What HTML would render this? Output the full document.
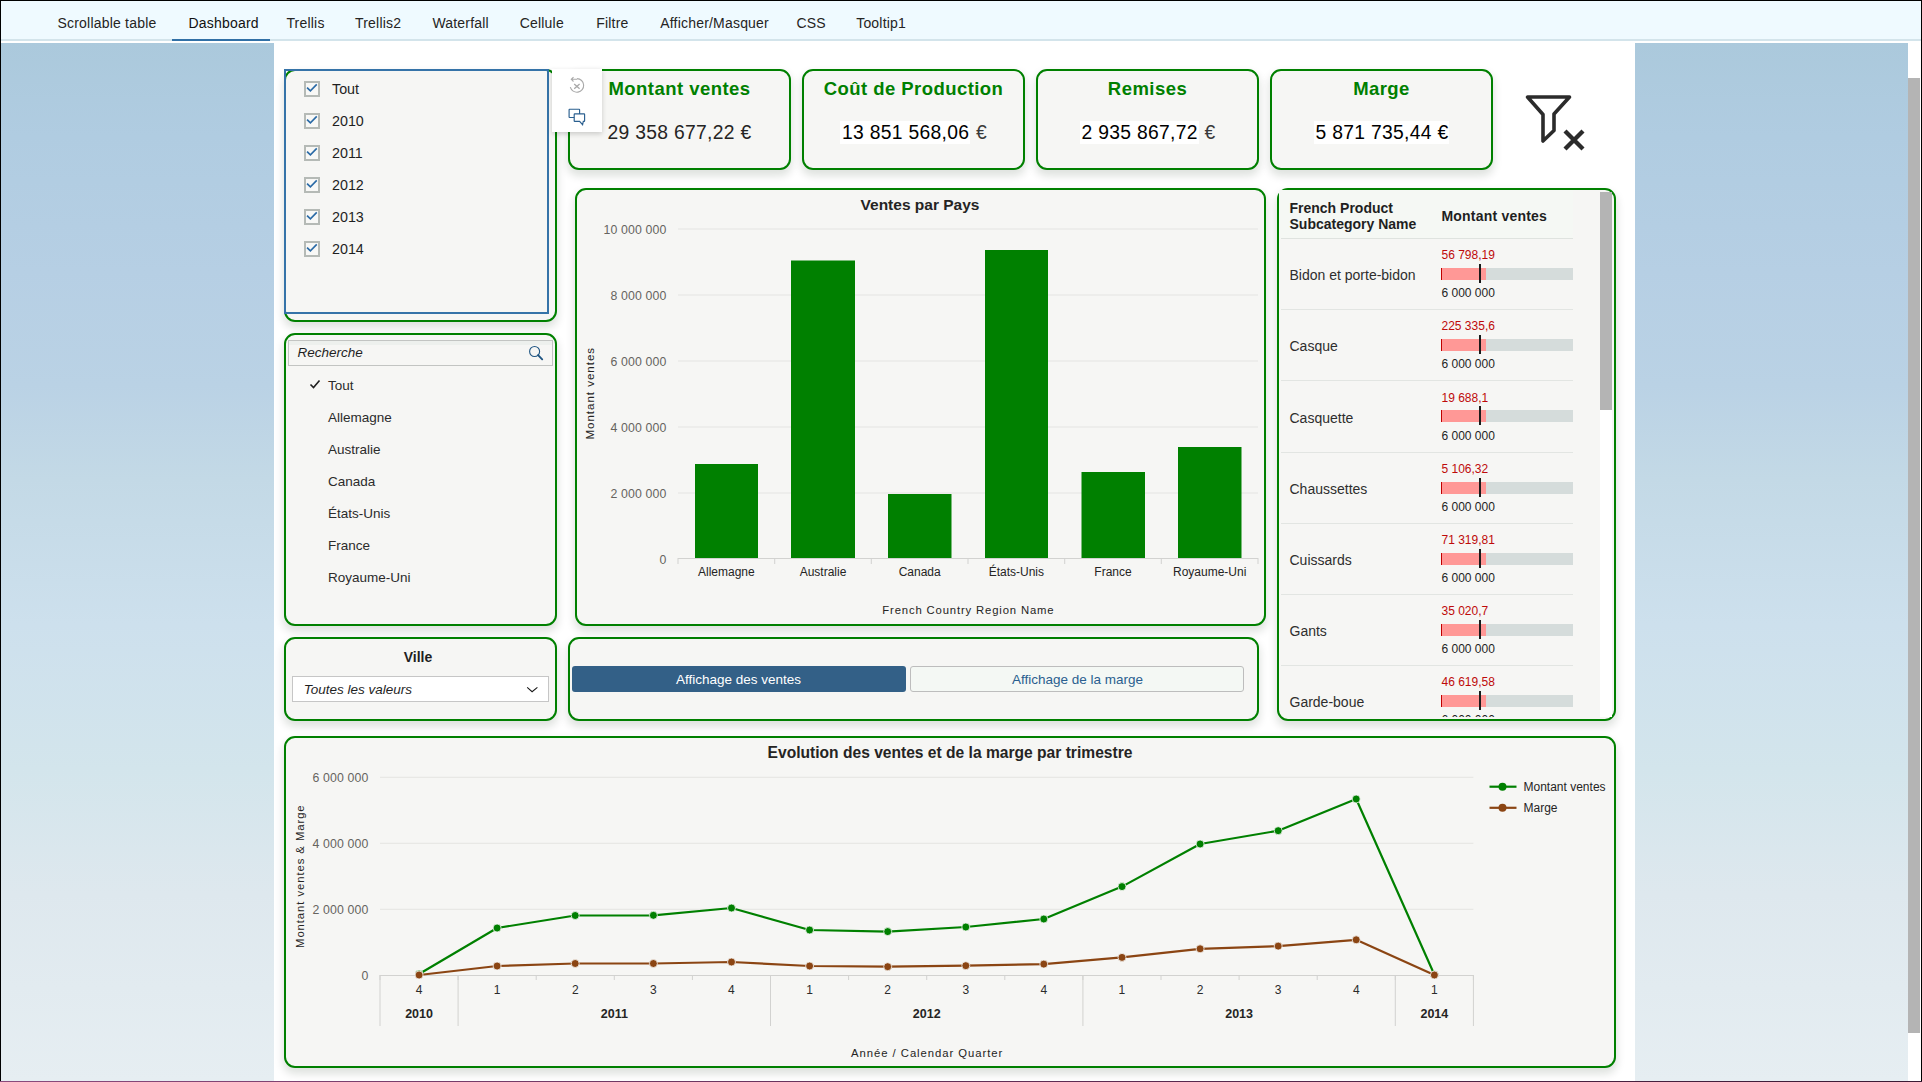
<!DOCTYPE html>
<html><head><meta charset="utf-8"><title>Dashboard</title>
<style>
html,body{margin:0;padding:0;}
body{width:1922px;height:1082px;overflow:hidden;position:relative;background:#fff;font-family:"Liberation Sans", sans-serif;}
.t{position:absolute;white-space:nowrap;font-family:"Liberation Sans", sans-serif;}
svg{position:absolute;overflow:visible;}
</style></head><body>

<div style="position:absolute;left:0px;top:0px;width:1922px;height:1082px;background:#ffffff;"></div>
<div style="position:absolute;left:1px;top:1px;width:1920px;height:38px;background:#effaff;"></div>
<div style="position:absolute;left:1px;top:39px;width:1920px;height:2px;background:#d3e4eb;"></div>
<div style="position:absolute;left:1px;top:43px;width:273px;height:1038px;background:linear-gradient(180deg,#abc9dc 0%,#b0cce1 9%,#b6cfe4 22%,#bad2e5 33%,#c3d9e6 42%,#cde0ed 56%,#d3e5ec 70%,#dee8ee 82%,#e6eef2 100%);"></div>
<div style="position:absolute;left:1635px;top:43px;width:273px;height:1038px;background:linear-gradient(180deg,#abc9dc 0%,#b0cce1 9%,#b6cfe4 22%,#bad2e5 33%,#c3d9e6 42%,#cde0ed 56%,#d3e5ec 70%,#dee8ee 82%,#e6eef2 100%);"></div>
<div style="position:absolute;left:1908px;top:41px;width:13px;height:1040px;background:#ffffff;"></div>
<div style="position:absolute;left:1908px;top:78px;width:12px;height:955px;background:#b4b4b4;"></div>
<div style="position:absolute;left:0px;top:0px;width:1922px;height:1px;background:#000;"></div>
<div style="position:absolute;left:0px;top:0px;width:1px;height:1082px;background:#000;"></div>
<div style="position:absolute;left:1921px;top:0px;width:1px;height:1082px;background:#000;"></div>
<div style="position:absolute;left:0px;top:1081px;width:1922px;height:1px;background:linear-gradient(90deg,#8a4a7c,#5a2a50 60%,#3a1a34);"></div>
<div class="t" style="top:15.65px;font-size:14px;line-height:14px;height:14px;color:#252423;letter-spacing:0.2px;left:57.50px;">Scrollable table</div>
<div class="t" style="top:15.65px;font-size:14px;line-height:14px;height:14px;color:#111111;letter-spacing:0.2px;left:188.50px;">Dashboard</div>
<div class="t" style="top:15.65px;font-size:14px;line-height:14px;height:14px;color:#252423;letter-spacing:0.2px;left:286.40px;">Trellis</div>
<div class="t" style="top:15.65px;font-size:14px;line-height:14px;height:14px;color:#252423;letter-spacing:0.2px;left:355.00px;">Trellis2</div>
<div class="t" style="top:15.65px;font-size:14px;line-height:14px;height:14px;color:#252423;letter-spacing:0.2px;left:432.40px;">Waterfall</div>
<div class="t" style="top:15.65px;font-size:14px;line-height:14px;height:14px;color:#252423;letter-spacing:0.2px;left:519.70px;">Cellule</div>
<div class="t" style="top:15.65px;font-size:14px;line-height:14px;height:14px;color:#252423;letter-spacing:0.2px;left:596.20px;">Filtre</div>
<div class="t" style="top:15.65px;font-size:14px;line-height:14px;height:14px;color:#252423;letter-spacing:0.2px;left:660.20px;">Afficher/Masquer</div>
<div class="t" style="top:15.65px;font-size:14px;line-height:14px;height:14px;color:#252423;letter-spacing:0.2px;left:796.50px;">CSS</div>
<div class="t" style="top:15.65px;font-size:14px;line-height:14px;height:14px;color:#252423;letter-spacing:0.2px;left:856.20px;">Tooltip1</div>
<div style="position:absolute;left:172px;top:39px;width:98px;height:2px;background:#3170a6;"></div>
<div style="position:absolute;left:284px;top:69px;width:273px;height:253px;box-sizing:border-box;border:2px solid #008000;border-radius:11px;background:#f6f6f4;box-shadow:0 5px 9px 1px rgba(10,30,10,0.13);"></div>
<div style="position:absolute;left:284px;top:69px;width:265px;height:245px;box-sizing:border-box;border:2px solid #3573a8;"></div>
<div style="position:absolute;left:304px;top:81px;width:16px;height:16px;box-sizing:border-box;border:2px solid #b5bab6;background:#f8f8f6;"></div>
<svg style="left:304px;top:81px" width="16" height="16" viewBox="0 0 16 16"><path d="M3.6 7.2 L6.4 9.9 L12.2 4.0" fill="none" stroke="#2a6aa6" stroke-width="1.6" stroke-linecap="square"/></svg>
<div class="t" style="top:82.41px;font-size:14.3px;line-height:14.3px;height:14.3px;color:#1f1f1f;left:332.00px;">Tout</div>
<div style="position:absolute;left:304px;top:113px;width:16px;height:16px;box-sizing:border-box;border:2px solid #b5bab6;background:#f8f8f6;"></div>
<svg style="left:304px;top:113px" width="16" height="16" viewBox="0 0 16 16"><path d="M3.6 7.2 L6.4 9.9 L12.2 4.0" fill="none" stroke="#2a6aa6" stroke-width="1.6" stroke-linecap="square"/></svg>
<div class="t" style="top:114.41px;font-size:14.3px;line-height:14.3px;height:14.3px;color:#1f1f1f;left:332.00px;">2010</div>
<div style="position:absolute;left:304px;top:145px;width:16px;height:16px;box-sizing:border-box;border:2px solid #b5bab6;background:#f8f8f6;"></div>
<svg style="left:304px;top:145px" width="16" height="16" viewBox="0 0 16 16"><path d="M3.6 7.2 L6.4 9.9 L12.2 4.0" fill="none" stroke="#2a6aa6" stroke-width="1.6" stroke-linecap="square"/></svg>
<div class="t" style="top:146.41px;font-size:14.3px;line-height:14.3px;height:14.3px;color:#1f1f1f;left:332.00px;">2011</div>
<div style="position:absolute;left:304px;top:177px;width:16px;height:16px;box-sizing:border-box;border:2px solid #b5bab6;background:#f8f8f6;"></div>
<svg style="left:304px;top:177px" width="16" height="16" viewBox="0 0 16 16"><path d="M3.6 7.2 L6.4 9.9 L12.2 4.0" fill="none" stroke="#2a6aa6" stroke-width="1.6" stroke-linecap="square"/></svg>
<div class="t" style="top:178.41px;font-size:14.3px;line-height:14.3px;height:14.3px;color:#1f1f1f;left:332.00px;">2012</div>
<div style="position:absolute;left:304px;top:209px;width:16px;height:16px;box-sizing:border-box;border:2px solid #b5bab6;background:#f8f8f6;"></div>
<svg style="left:304px;top:209px" width="16" height="16" viewBox="0 0 16 16"><path d="M3.6 7.2 L6.4 9.9 L12.2 4.0" fill="none" stroke="#2a6aa6" stroke-width="1.6" stroke-linecap="square"/></svg>
<div class="t" style="top:210.41px;font-size:14.3px;line-height:14.3px;height:14.3px;color:#1f1f1f;left:332.00px;">2013</div>
<div style="position:absolute;left:304px;top:241px;width:16px;height:16px;box-sizing:border-box;border:2px solid #b5bab6;background:#f8f8f6;"></div>
<svg style="left:304px;top:241px" width="16" height="16" viewBox="0 0 16 16"><path d="M3.6 7.2 L6.4 9.9 L12.2 4.0" fill="none" stroke="#2a6aa6" stroke-width="1.6" stroke-linecap="square"/></svg>
<div class="t" style="top:242.41px;font-size:14.3px;line-height:14.3px;height:14.3px;color:#1f1f1f;left:332.00px;">2014</div>
<div style="position:absolute;left:552px;top:69px;width:50px;height:63px;background:#ffffff;box-shadow:0 2px 5px rgba(0,0,0,0.18);z-index:5;"></div>
<svg style="left:566px;top:75px;z-index:6" width="20" height="20" viewBox="0 0 20 20">
<path d="M11.06 3.6 A6.8 6.8 0 1 1 4.3 12.2" fill="none" stroke="#a9a9a9" stroke-width="1.1"/>
<path d="M5.3 4.3 L11.2 4.3 M7.5 2.1 L5.3 4.3 L7.5 6.5" fill="none" stroke="#a9a9a9" stroke-width="1.1"/>
<path d="M8.2 9 L13.6 13.7 M13.6 9 L8.2 13.7" fill="none" stroke="#a9a9a9" stroke-width="1.3"/>
</svg>
<svg style="left:566px;top:106px;z-index:6" width="20" height="20" viewBox="0 0 20 20">
<path d="M8.2 11.5 L3.6 11.5 Q3.1 11.5 3.1 11 L3.1 3.7 Q3.1 3.2 3.6 3.2 L13.1 3.2 Q13.6 3.2 13.6 3.7 L13.6 7.9" fill="none" stroke="#2a5f8f" stroke-width="1.15"/>
<path d="M8.7 7.9 L18.1 7.9 Q18.6 7.9 18.6 8.4 L18.6 14.9 Q18.6 15.4 18.1 15.4 L17.3 15.4 L16.6 18.7 L13.6 15.4 L8.7 15.4 Q8.2 15.4 8.2 14.9 L8.2 8.4 Q8.2 7.9 8.7 7.9 Z" fill="none" stroke="#2a5f8f" stroke-width="1.15"/>
</svg>
<div style="position:absolute;left:284px;top:333px;width:273px;height:293px;box-sizing:border-box;border:2px solid #008000;border-radius:11px;background:#f6f6f4;box-shadow:0 5px 9px 1px rgba(10,30,10,0.13);"></div>
<div style="position:absolute;left:288px;top:340px;width:265px;height:26px;box-sizing:border-box;border:1px solid #c2c4c2;background:linear-gradient(180deg,#edf0ed 0px,#edf0ed 4px,#f6f6f4 4px);"></div>
<div class="t" style="top:346.49px;font-size:13.5px;line-height:13.5px;height:13.5px;color:#1f1f1f;font-style:italic;left:297.50px;">Recherche</div>
<svg style="left:528px;top:345px" width="16" height="16" viewBox="0 0 16 16">
<circle cx="6.6" cy="6.5" r="5" fill="none" stroke="#1f5582" stroke-width="1.1"/>
<path d="M10.1 10.1 L14.2 14.3" stroke="#1f5582" stroke-width="1.9" stroke-linecap="round"/></svg>
<svg style="left:309px;top:378px" width="12" height="12" viewBox="0 0 12 12">
<path d="M1.5 6.5 L4.5 9.5 L10.5 2.5" fill="none" stroke="#1f1f1f" stroke-width="1.6"/></svg>
<div class="t" style="top:379.29px;font-size:13.5px;line-height:13.5px;height:13.5px;color:#2b2b2b;left:328.00px;">Tout</div>
<div class="t" style="top:411.29px;font-size:13.5px;line-height:13.5px;height:13.5px;color:#2b2b2b;left:328.00px;">Allemagne</div>
<div class="t" style="top:443.29px;font-size:13.5px;line-height:13.5px;height:13.5px;color:#2b2b2b;left:328.00px;">Australie</div>
<div class="t" style="top:475.29px;font-size:13.5px;line-height:13.5px;height:13.5px;color:#2b2b2b;left:328.00px;">Canada</div>
<div class="t" style="top:507.29px;font-size:13.5px;line-height:13.5px;height:13.5px;color:#2b2b2b;left:328.00px;">États-Unis</div>
<div class="t" style="top:539.29px;font-size:13.5px;line-height:13.5px;height:13.5px;color:#2b2b2b;left:328.00px;">France</div>
<div class="t" style="top:571.29px;font-size:13.5px;line-height:13.5px;height:13.5px;color:#2b2b2b;left:328.00px;">Royaume-Uni</div>
<div style="position:absolute;left:284px;top:637px;width:273px;height:84px;box-sizing:border-box;border:2px solid #008000;border-radius:11px;background:#f6f6f4;box-shadow:0 5px 9px 1px rgba(10,30,10,0.13);"></div>
<div class="t" style="top:650.25px;font-size:14px;line-height:14px;height:14px;color:#1f1f1f;font-weight:bold;left:-182.00px;width:1200px;text-align:center;">Ville</div>
<div style="position:absolute;left:292px;top:676px;width:257px;height:26px;box-sizing:border-box;border:1px solid #c6c6c6;background:#ffffff;"></div>
<div class="t" style="top:682.99px;font-size:13.5px;line-height:13.5px;height:13.5px;color:#1f1f1f;font-style:italic;left:303.70px;">Toutes les valeurs</div>
<svg style="left:526px;top:684px" width="13" height="9" viewBox="0 0 13 9">
<path d="M1.2 3.4 L6.1 7.7 L11.4 3.4" fill="none" stroke="#151515" stroke-width="1.05"/></svg>
<div style="position:absolute;left:568px;top:637px;width:691px;height:84px;box-sizing:border-box;border:2px solid #008000;border-radius:11px;background:#f6f6f4;box-shadow:0 5px 9px 1px rgba(10,30,10,0.13);"></div>
<div style="position:absolute;left:572px;top:666px;width:334px;height:26px;background:#336087;border-radius:3px;"></div>
<div class="t" style="top:673.09px;font-size:13.5px;line-height:13.5px;height:13.5px;color:#ffffff;left:138.50px;width:1200px;text-align:center;">Affichage des ventes</div>
<div style="position:absolute;left:910px;top:666px;width:334px;height:26px;box-sizing:border-box;border:1px solid #bdbdbd;border-radius:3px;background:#f4f8f4;"></div>
<div class="t" style="top:673.09px;font-size:13.5px;line-height:13.5px;height:13.5px;color:#2a5f8f;left:477.50px;width:1200px;text-align:center;">Affichage de la marge</div>
<div style="position:absolute;left:568px;top:69px;width:223px;height:101px;box-sizing:border-box;border:2px solid #008000;border-radius:11px;background:#f6f6f4;box-shadow:0 5px 9px 1px rgba(10,30,10,0.13);"></div>
<div class="t" style="top:79.58px;font-size:18.5px;line-height:18.5px;height:18.5px;color:#008000;font-weight:bold;letter-spacing:0.45px;left:79.50px;width:1200px;text-align:center;">Montant ventes</div>
<div class="t" style="top:122.70px;font-size:19.3px;line-height:19.3px;height:19.3px;color:#252423;letter-spacing:0.3px;left:79.50px;width:1200px;text-align:center;">29 358 677,22 €</div>
<div style="position:absolute;left:802px;top:69px;width:223px;height:101px;box-sizing:border-box;border:2px solid #008000;border-radius:11px;background:#f6f6f4;box-shadow:0 5px 9px 1px rgba(10,30,10,0.13);"></div>
<div class="t" style="top:79.58px;font-size:18.5px;line-height:18.5px;height:18.5px;color:#008000;font-weight:bold;letter-spacing:0.45px;left:313.50px;width:1200px;text-align:center;">Coût de Production</div>
<div class="t" style="top:122.70px;font-size:19.3px;line-height:19.3px;height:19.3px;color:#000;letter-spacing:0.3px;left:313.50px;width:1200px;text-align:center;"><span style="background:#ffffff;color:#000;padding:1px 1px 1px 2px;">13 851 568,06</span> <span style="color:#3a3a3a">€</span></div>
<div style="position:absolute;left:1036px;top:69px;width:223px;height:101px;box-sizing:border-box;border:2px solid #008000;border-radius:11px;background:#f6f6f4;box-shadow:0 5px 9px 1px rgba(10,30,10,0.13);"></div>
<div class="t" style="top:79.58px;font-size:18.5px;line-height:18.5px;height:18.5px;color:#008000;font-weight:bold;letter-spacing:0.45px;left:547.50px;width:1200px;text-align:center;">Remises</div>
<div class="t" style="top:122.70px;font-size:19.3px;line-height:19.3px;height:19.3px;color:#000;letter-spacing:0.3px;left:547.50px;width:1200px;text-align:center;"><span style="background:#ffffff;color:#000;padding:1px 1px 1px 2px;">2 935 867,72</span> <span style="color:#3a3a3a">€</span></div>
<div style="position:absolute;left:1270px;top:69px;width:223px;height:101px;box-sizing:border-box;border:2px solid #008000;border-radius:11px;background:#f6f6f4;box-shadow:0 5px 9px 1px rgba(10,30,10,0.13);"></div>
<div class="t" style="top:79.58px;font-size:18.5px;line-height:18.5px;height:18.5px;color:#008000;font-weight:bold;letter-spacing:0.45px;left:781.50px;width:1200px;text-align:center;">Marge</div>
<div class="t" style="top:122.70px;font-size:19.3px;line-height:19.3px;height:19.3px;color:#000;letter-spacing:0.3px;left:781.50px;width:1200px;text-align:center;"><span style="background:#ffffff;color:#000;padding:1px 1px 1px 2px;">5 871 735,44 €</span></div>
<svg style="left:1520px;top:90px" width="72" height="66" viewBox="0 0 72 66">
<path d="M7.5 7 L49.5 7 L34 24 L34 40.5 L23 51 L23 24.5 Z" fill="none" stroke="#2b2b2b" stroke-width="3.6" stroke-linejoin="round"/>
<path d="M45 41 L63 59 M63 41 L45 59" stroke="#2b2b2b" stroke-width="4.3"/>
</svg>
<div style="position:absolute;left:575px;top:188px;width:691px;height:438px;box-sizing:border-box;border:2px solid #008000;border-radius:11px;background:#f6f6f4;box-shadow:0 5px 9px 1px rgba(10,30,10,0.13);"></div>
<div class="t" style="top:197.03px;font-size:15.5px;line-height:15.5px;height:15.5px;color:#252423;font-weight:bold;left:320.00px;width:1200px;text-align:center;">Ventes par Pays</div>
<svg style="left:0px;top:0px" width="1922" height="1082"><rect x="678" y="492.5" width="580" height="1" fill="#e4e4e2"/><rect x="678" y="426.5" width="580" height="1" fill="#e4e4e2"/><rect x="678" y="360.5" width="580" height="1" fill="#e4e4e2"/><rect x="678" y="294.5" width="580" height="1" fill="#e4e4e2"/><rect x="678" y="228.5" width="580" height="1" fill="#e4e4e2"/><rect x="678" y="558" width="580" height="1" fill="#d2d2d0"/><rect x="677.5" y="558" width="1" height="6" fill="#d2d2d0"/><rect x="774.2" y="558" width="1" height="6" fill="#d2d2d0"/><rect x="870.8" y="558" width="1" height="6" fill="#d2d2d0"/><rect x="967.5" y="558" width="1" height="6" fill="#d2d2d0"/><rect x="1064.2" y="558" width="1" height="6" fill="#d2d2d0"/><rect x="1160.8" y="558" width="1" height="6" fill="#d2d2d0"/><rect x="1257.5" y="558" width="1" height="6" fill="#d2d2d0"/><rect x="695" y="464" width="63" height="94" fill="#008000"/><rect x="791" y="260.5" width="64" height="297.5" fill="#008000"/><rect x="888" y="494" width="63.5" height="64" fill="#008000"/><rect x="985" y="250" width="63" height="308" fill="#008000"/><rect x="1081.5" y="472" width="63.5" height="86" fill="#008000"/><rect x="1178" y="447" width="63.5" height="111" fill="#008000"/></svg>
<div class="t" style="top:553.87px;font-size:12.3px;line-height:12.3px;height:12.3px;color:#66645f;letter-spacing:0.15px;left:-533.50px;width:1200px;text-align:right;">0</div>
<div class="t" style="top:487.87px;font-size:12.3px;line-height:12.3px;height:12.3px;color:#66645f;letter-spacing:0.15px;left:-533.50px;width:1200px;text-align:right;">2 000 000</div>
<div class="t" style="top:421.87px;font-size:12.3px;line-height:12.3px;height:12.3px;color:#66645f;letter-spacing:0.15px;left:-533.50px;width:1200px;text-align:right;">4 000 000</div>
<div class="t" style="top:355.87px;font-size:12.3px;line-height:12.3px;height:12.3px;color:#66645f;letter-spacing:0.15px;left:-533.50px;width:1200px;text-align:right;">6 000 000</div>
<div class="t" style="top:289.87px;font-size:12.3px;line-height:12.3px;height:12.3px;color:#66645f;letter-spacing:0.15px;left:-533.50px;width:1200px;text-align:right;">8 000 000</div>
<div class="t" style="top:223.87px;font-size:12.3px;line-height:12.3px;height:12.3px;color:#66645f;letter-spacing:0.15px;left:-533.50px;width:1200px;text-align:right;">10 000 000</div>
<div class="t" style="top:566.22px;font-size:12px;line-height:12px;height:12px;color:#252423;left:126.34px;width:1200px;text-align:center;">Allemagne</div>
<div class="t" style="top:566.22px;font-size:12px;line-height:12px;height:12px;color:#252423;left:223.00px;width:1200px;text-align:center;">Australie</div>
<div class="t" style="top:566.22px;font-size:12px;line-height:12px;height:12px;color:#252423;left:319.67px;width:1200px;text-align:center;">Canada</div>
<div class="t" style="top:566.22px;font-size:12px;line-height:12px;height:12px;color:#252423;left:416.35px;width:1200px;text-align:center;">États-Unis</div>
<div class="t" style="top:566.22px;font-size:12px;line-height:12px;height:12px;color:#252423;left:513.01px;width:1200px;text-align:center;">France</div>
<div class="t" style="top:566.22px;font-size:12px;line-height:12px;height:12px;color:#252423;left:609.68px;width:1200px;text-align:center;">Royaume-Uni</div>
<div class="t" style="top:605.35px;font-size:11.3px;line-height:11.3px;height:11.3px;color:#252423;letter-spacing:0.85px;left:368.40px;width:1200px;text-align:center;">French Country Region Name</div>
<div class="t" style="left:540.5px;top:388px;width:100px;height:11.5px;font-size:11.5px;line-height:11.5px;text-align:center;color:#252423;transform:rotate(-90deg);transform-origin:50% 50%;letter-spacing:1px;text-indent:1px;">Montant ventes</div>
<div style="position:absolute;left:1277px;top:188px;width:339px;height:533px;box-sizing:border-box;border:2px solid #008000;border-radius:11px;background:#f6f6f4;box-shadow:0 5px 9px 1px rgba(10,30,10,0.13);overflow:hidden;"></div>
<div style="position:absolute;left:1279px;top:190px;width:294px;height:48px;background:#f5f8f4;"></div>
<div class="t" style="top:201.05px;font-size:14px;line-height:14px;height:14px;color:#1f1f1f;font-weight:bold;left:1289.50px;">French Product</div>
<div class="t" style="top:217.05px;font-size:14px;line-height:14px;height:14px;color:#1f1f1f;font-weight:bold;left:1289.50px;">Subcategory Name</div>
<div class="t" style="top:208.75px;font-size:14px;line-height:14px;height:14px;color:#1f1f1f;font-weight:bold;letter-spacing:0.2px;left:1441.50px;">Montant ventes</div>
<div style="position:absolute;left:1281px;top:238px;width:292px;height:1px;background:#dfe3df;"></div>
<div style="position:absolute;left:1600px;top:192px;width:12px;height:218px;background:#b4b4b4;"></div>
<div style="position:absolute;left:1600px;top:410px;width:12px;height:307px;background:#ffffff;"></div>
<div style="position:absolute;left:1279px;top:239px;width:321px;height:478px;overflow:hidden;">
<div class="t" style="left:10.5px;top:29.25px;font-size:14px;line-height:14px;color:#2e2e2e;">Bidon et porte-bidon</div>
<div class="t" style="left:162.5px;top:10.22px;font-size:12px;line-height:12px;color:#be0a0a;">56 798,19</div>
<div style="position:absolute;left:162px;top:29.0px;width:132px;height:12px;background:#d5dcdb;"></div>
<div style="position:absolute;left:162px;top:29.0px;width:45px;height:12px;background:#ff9896;"></div>
<div style="position:absolute;left:162px;top:29.0px;width:1px;height:12px;background:#c00000;"></div>
<div style="position:absolute;left:200px;top:25.0px;width:2px;height:19px;background:#1a1a1a;"></div>
<div class="t" style="left:162.5px;top:48.22px;font-size:12px;line-height:12px;color:#1f1f1f;">6 000 000</div>
<div style="position:absolute;left:2px;top:70.2px;width:292px;height:1px;background:#e2e5e2;"></div>
<div class="t" style="left:10.5px;top:100.42px;font-size:14px;line-height:14px;color:#2e2e2e;">Casque</div>
<div class="t" style="left:162.5px;top:81.39px;font-size:12px;line-height:12px;color:#be0a0a;">225 335,6</div>
<div style="position:absolute;left:162px;top:100.2px;width:132px;height:12px;background:#d5dcdb;"></div>
<div style="position:absolute;left:162px;top:100.2px;width:45px;height:12px;background:#ff9896;"></div>
<div style="position:absolute;left:162px;top:100.2px;width:1px;height:12px;background:#c00000;"></div>
<div style="position:absolute;left:200px;top:96.2px;width:2px;height:19px;background:#1a1a1a;"></div>
<div class="t" style="left:162.5px;top:119.39px;font-size:12px;line-height:12px;color:#1f1f1f;">6 000 000</div>
<div style="position:absolute;left:2px;top:141.3px;width:292px;height:1px;background:#e2e5e2;"></div>
<div class="t" style="left:10.5px;top:171.59px;font-size:14px;line-height:14px;color:#2e2e2e;">Casquette</div>
<div class="t" style="left:162.5px;top:152.56px;font-size:12px;line-height:12px;color:#be0a0a;">19 688,1</div>
<div style="position:absolute;left:162px;top:171.3px;width:132px;height:12px;background:#d5dcdb;"></div>
<div style="position:absolute;left:162px;top:171.3px;width:45px;height:12px;background:#ff9896;"></div>
<div style="position:absolute;left:162px;top:171.3px;width:1px;height:12px;background:#c00000;"></div>
<div style="position:absolute;left:200px;top:167.3px;width:2px;height:19px;background:#1a1a1a;"></div>
<div class="t" style="left:162.5px;top:190.56px;font-size:12px;line-height:12px;color:#1f1f1f;">6 000 000</div>
<div style="position:absolute;left:2px;top:212.5px;width:292px;height:1px;background:#e2e5e2;"></div>
<div class="t" style="left:10.5px;top:242.76px;font-size:14px;line-height:14px;color:#2e2e2e;">Chaussettes</div>
<div class="t" style="left:162.5px;top:223.73px;font-size:12px;line-height:12px;color:#be0a0a;">5 106,32</div>
<div style="position:absolute;left:162px;top:242.5px;width:132px;height:12px;background:#d5dcdb;"></div>
<div style="position:absolute;left:162px;top:242.5px;width:45px;height:12px;background:#ff9896;"></div>
<div style="position:absolute;left:162px;top:242.5px;width:1px;height:12px;background:#c00000;"></div>
<div style="position:absolute;left:200px;top:238.5px;width:2px;height:19px;background:#1a1a1a;"></div>
<div class="t" style="left:162.5px;top:261.73px;font-size:12px;line-height:12px;color:#1f1f1f;">6 000 000</div>
<div style="position:absolute;left:2px;top:283.7px;width:292px;height:1px;background:#e2e5e2;"></div>
<div class="t" style="left:10.5px;top:313.93px;font-size:14px;line-height:14px;color:#2e2e2e;">Cuissards</div>
<div class="t" style="left:162.5px;top:294.90px;font-size:12px;line-height:12px;color:#be0a0a;">71 319,81</div>
<div style="position:absolute;left:162px;top:313.7px;width:132px;height:12px;background:#d5dcdb;"></div>
<div style="position:absolute;left:162px;top:313.7px;width:45px;height:12px;background:#ff9896;"></div>
<div style="position:absolute;left:162px;top:313.7px;width:1px;height:12px;background:#c00000;"></div>
<div style="position:absolute;left:200px;top:309.7px;width:2px;height:19px;background:#1a1a1a;"></div>
<div class="t" style="left:162.5px;top:332.90px;font-size:12px;line-height:12px;color:#1f1f1f;">6 000 000</div>
<div style="position:absolute;left:2px;top:354.9px;width:292px;height:1px;background:#e2e5e2;"></div>
<div class="t" style="left:10.5px;top:385.10px;font-size:14px;line-height:14px;color:#2e2e2e;">Gants</div>
<div class="t" style="left:162.5px;top:366.07px;font-size:12px;line-height:12px;color:#be0a0a;">35 020,7</div>
<div style="position:absolute;left:162px;top:384.9px;width:132px;height:12px;background:#d5dcdb;"></div>
<div style="position:absolute;left:162px;top:384.9px;width:45px;height:12px;background:#ff9896;"></div>
<div style="position:absolute;left:162px;top:384.9px;width:1px;height:12px;background:#c00000;"></div>
<div style="position:absolute;left:200px;top:380.9px;width:2px;height:19px;background:#1a1a1a;"></div>
<div class="t" style="left:162.5px;top:404.07px;font-size:12px;line-height:12px;color:#1f1f1f;">6 000 000</div>
<div style="position:absolute;left:2px;top:426.0px;width:292px;height:1px;background:#e2e5e2;"></div>
<div class="t" style="left:10.5px;top:456.27px;font-size:14px;line-height:14px;color:#2e2e2e;">Garde-boue</div>
<div class="t" style="left:162.5px;top:437.24px;font-size:12px;line-height:12px;color:#be0a0a;">46 619,58</div>
<div style="position:absolute;left:162px;top:456.0px;width:132px;height:12px;background:#d5dcdb;"></div>
<div style="position:absolute;left:162px;top:456.0px;width:45px;height:12px;background:#ff9896;"></div>
<div style="position:absolute;left:162px;top:456.0px;width:1px;height:12px;background:#c00000;"></div>
<div style="position:absolute;left:200px;top:452.0px;width:2px;height:19px;background:#1a1a1a;"></div>
<div class="t" style="left:162.5px;top:475.24px;font-size:12px;line-height:12px;color:#1f1f1f;">6 000 000</div>
</div>
<div style="position:absolute;left:284px;top:736px;width:1332px;height:332px;box-sizing:border-box;border:2px solid #008000;border-radius:11px;background:#f6f6f4;box-shadow:0 5px 9px 1px rgba(10,30,10,0.13);"></div>
<div class="t" style="top:744.98px;font-size:15.6px;line-height:15.6px;height:15.6px;color:#252423;font-weight:bold;left:350.00px;width:1200px;text-align:center;">Evolution des ventes et de la marge par trimestre</div>
<svg style="left:0px;top:0px" width="1922" height="1082"><rect x="380" y="908.8" width="1093.4" height="1" fill="#e4e4e2"/><rect x="380" y="842.8" width="1093.4" height="1" fill="#e4e4e2"/><rect x="380" y="776.8" width="1093.4" height="1" fill="#e4e4e2"/><rect x="380" y="975" width="1093.4" height="1" fill="#d2d2d0"/><rect x="379.5" y="975" width="1" height="5" fill="#d2d2d0"/><rect x="457.6" y="975" width="1" height="5" fill="#d2d2d0"/><rect x="535.7" y="975" width="1" height="5" fill="#d2d2d0"/><rect x="613.8" y="975" width="1" height="5" fill="#d2d2d0"/><rect x="691.9" y="975" width="1" height="5" fill="#d2d2d0"/><rect x="770.0" y="975" width="1" height="5" fill="#d2d2d0"/><rect x="848.1" y="975" width="1" height="5" fill="#d2d2d0"/><rect x="926.2" y="975" width="1" height="5" fill="#d2d2d0"/><rect x="1004.3" y="975" width="1" height="5" fill="#d2d2d0"/><rect x="1082.4" y="975" width="1" height="5" fill="#d2d2d0"/><rect x="1160.5" y="975" width="1" height="5" fill="#d2d2d0"/><rect x="1238.6" y="975" width="1" height="5" fill="#d2d2d0"/><rect x="1316.7" y="975" width="1" height="5" fill="#d2d2d0"/><rect x="1394.8" y="975" width="1" height="5" fill="#d2d2d0"/><rect x="1472.9" y="975" width="1" height="5" fill="#d2d2d0"/><rect x="379.5" y="975" width="1" height="51" fill="#d2d2d0"/><rect x="457.6" y="975" width="1" height="51" fill="#d2d2d0"/><rect x="770.0" y="975" width="1" height="51" fill="#d2d2d0"/><rect x="1082.4" y="975" width="1" height="51" fill="#d2d2d0"/><rect x="1394.8" y="975" width="1" height="51" fill="#d2d2d0"/><rect x="1472.9" y="975" width="1" height="51" fill="#d2d2d0"/><polyline points="419.1,974.0 497.1,928.0 575.2,915.5 653.4,915.3 731.5,908.0 809.6,930.0 887.7,931.6 965.8,927.0 1043.8,919.0 1122.0,886.6 1200.1,844.0 1278.2,830.7 1356.2,799.0 1434.4,974.8" fill="none" stroke="#008000" stroke-width="2.2" stroke-linejoin="round"/><circle cx="419.1" cy="974.0" r="4" fill="#008000" stroke="#f6f6f4" stroke-width="0.8"/><circle cx="497.1" cy="928.0" r="4" fill="#008000" stroke="#f6f6f4" stroke-width="0.8"/><circle cx="575.2" cy="915.5" r="4" fill="#008000" stroke="#f6f6f4" stroke-width="0.8"/><circle cx="653.4" cy="915.3" r="4" fill="#008000" stroke="#f6f6f4" stroke-width="0.8"/><circle cx="731.5" cy="908.0" r="4" fill="#008000" stroke="#f6f6f4" stroke-width="0.8"/><circle cx="809.6" cy="930.0" r="4" fill="#008000" stroke="#f6f6f4" stroke-width="0.8"/><circle cx="887.7" cy="931.6" r="4" fill="#008000" stroke="#f6f6f4" stroke-width="0.8"/><circle cx="965.8" cy="927.0" r="4" fill="#008000" stroke="#f6f6f4" stroke-width="0.8"/><circle cx="1043.8" cy="919.0" r="4" fill="#008000" stroke="#f6f6f4" stroke-width="0.8"/><circle cx="1122.0" cy="886.6" r="4" fill="#008000" stroke="#f6f6f4" stroke-width="0.8"/><circle cx="1200.1" cy="844.0" r="4" fill="#008000" stroke="#f6f6f4" stroke-width="0.8"/><circle cx="1278.2" cy="830.7" r="4" fill="#008000" stroke="#f6f6f4" stroke-width="0.8"/><circle cx="1356.2" cy="799.0" r="4" fill="#008000" stroke="#f6f6f4" stroke-width="0.8"/><circle cx="1434.4" cy="974.8" r="4" fill="#008000" stroke="#f6f6f4" stroke-width="0.8"/><polyline points="419.1,975.0 497.1,966.0 575.2,963.5 653.4,963.5 731.5,962.0 809.6,966.0 887.7,966.7 965.8,965.7 1043.8,964.1 1122.0,957.4 1200.1,948.8 1278.2,946.1 1356.2,939.8 1434.4,975.0" fill="none" stroke="#8b4513" stroke-width="2.2" stroke-linejoin="round"/><circle cx="419.1" cy="975.0" r="4" fill="#8b4513" stroke="#f6f6f4" stroke-width="0.8"/><circle cx="497.1" cy="966.0" r="4" fill="#8b4513" stroke="#f6f6f4" stroke-width="0.8"/><circle cx="575.2" cy="963.5" r="4" fill="#8b4513" stroke="#f6f6f4" stroke-width="0.8"/><circle cx="653.4" cy="963.5" r="4" fill="#8b4513" stroke="#f6f6f4" stroke-width="0.8"/><circle cx="731.5" cy="962.0" r="4" fill="#8b4513" stroke="#f6f6f4" stroke-width="0.8"/><circle cx="809.6" cy="966.0" r="4" fill="#8b4513" stroke="#f6f6f4" stroke-width="0.8"/><circle cx="887.7" cy="966.7" r="4" fill="#8b4513" stroke="#f6f6f4" stroke-width="0.8"/><circle cx="965.8" cy="965.7" r="4" fill="#8b4513" stroke="#f6f6f4" stroke-width="0.8"/><circle cx="1043.8" cy="964.1" r="4" fill="#8b4513" stroke="#f6f6f4" stroke-width="0.8"/><circle cx="1122.0" cy="957.4" r="4" fill="#8b4513" stroke="#f6f6f4" stroke-width="0.8"/><circle cx="1200.1" cy="948.8" r="4" fill="#8b4513" stroke="#f6f6f4" stroke-width="0.8"/><circle cx="1278.2" cy="946.1" r="4" fill="#8b4513" stroke="#f6f6f4" stroke-width="0.8"/><circle cx="1356.2" cy="939.8" r="4" fill="#8b4513" stroke="#f6f6f4" stroke-width="0.8"/><circle cx="1434.4" cy="975.0" r="4" fill="#8b4513" stroke="#f6f6f4" stroke-width="0.8"/><line x1="1489.5" y1="786.7" x2="1516.5" y2="786.7" stroke="#008000" stroke-width="2.2"/><circle cx="1502.5" cy="786.7" r="4" fill="#008000"/><line x1="1489.5" y1="807.8" x2="1516.5" y2="807.8" stroke="#8b4513" stroke-width="2.2"/><circle cx="1502.5" cy="807.8" r="4" fill="#8b4513"/></svg>
<div class="t" style="top:781.22px;font-size:12px;line-height:12px;height:12px;color:#252423;left:1523.50px;">Montant ventes</div>
<div class="t" style="top:802.22px;font-size:12px;line-height:12px;height:12px;color:#252423;left:1523.50px;">Marge</div>
<div class="t" style="top:969.87px;font-size:12.3px;line-height:12.3px;height:12.3px;color:#66645f;letter-spacing:0.15px;left:-831.50px;width:1200px;text-align:right;">0</div>
<div class="t" style="top:903.87px;font-size:12.3px;line-height:12.3px;height:12.3px;color:#66645f;letter-spacing:0.15px;left:-831.50px;width:1200px;text-align:right;">2 000 000</div>
<div class="t" style="top:837.87px;font-size:12.3px;line-height:12.3px;height:12.3px;color:#66645f;letter-spacing:0.15px;left:-831.50px;width:1200px;text-align:right;">4 000 000</div>
<div class="t" style="top:771.87px;font-size:12.3px;line-height:12.3px;height:12.3px;color:#66645f;letter-spacing:0.15px;left:-831.50px;width:1200px;text-align:right;">6 000 000</div>
<div class="t" style="top:983.82px;font-size:12px;line-height:12px;height:12px;color:#2b2b2b;left:-180.95px;width:1200px;text-align:center;">4</div>
<div class="t" style="top:983.82px;font-size:12px;line-height:12px;height:12px;color:#2b2b2b;left:-102.85px;width:1200px;text-align:center;">1</div>
<div class="t" style="top:983.82px;font-size:12px;line-height:12px;height:12px;color:#2b2b2b;left:-24.75px;width:1200px;text-align:center;">2</div>
<div class="t" style="top:983.82px;font-size:12px;line-height:12px;height:12px;color:#2b2b2b;left:53.35px;width:1200px;text-align:center;">3</div>
<div class="t" style="top:983.82px;font-size:12px;line-height:12px;height:12px;color:#2b2b2b;left:131.45px;width:1200px;text-align:center;">4</div>
<div class="t" style="top:983.82px;font-size:12px;line-height:12px;height:12px;color:#2b2b2b;left:209.55px;width:1200px;text-align:center;">1</div>
<div class="t" style="top:983.82px;font-size:12px;line-height:12px;height:12px;color:#2b2b2b;left:287.65px;width:1200px;text-align:center;">2</div>
<div class="t" style="top:983.82px;font-size:12px;line-height:12px;height:12px;color:#2b2b2b;left:365.75px;width:1200px;text-align:center;">3</div>
<div class="t" style="top:983.82px;font-size:12px;line-height:12px;height:12px;color:#2b2b2b;left:443.85px;width:1200px;text-align:center;">4</div>
<div class="t" style="top:983.82px;font-size:12px;line-height:12px;height:12px;color:#2b2b2b;left:521.95px;width:1200px;text-align:center;">1</div>
<div class="t" style="top:983.82px;font-size:12px;line-height:12px;height:12px;color:#2b2b2b;left:600.05px;width:1200px;text-align:center;">2</div>
<div class="t" style="top:983.82px;font-size:12px;line-height:12px;height:12px;color:#2b2b2b;left:678.15px;width:1200px;text-align:center;">3</div>
<div class="t" style="top:983.82px;font-size:12px;line-height:12px;height:12px;color:#2b2b2b;left:756.25px;width:1200px;text-align:center;">4</div>
<div class="t" style="top:983.82px;font-size:12px;line-height:12px;height:12px;color:#2b2b2b;left:834.35px;width:1200px;text-align:center;">1</div>
<div class="t" style="top:1008.48px;font-size:12.5px;line-height:12.5px;height:12.5px;color:#252423;font-weight:bold;left:-180.95px;width:1200px;text-align:center;">2010</div>
<div class="t" style="top:1008.48px;font-size:12.5px;line-height:12.5px;height:12.5px;color:#252423;font-weight:bold;left:14.30px;width:1200px;text-align:center;">2011</div>
<div class="t" style="top:1008.48px;font-size:12.5px;line-height:12.5px;height:12.5px;color:#252423;font-weight:bold;left:326.70px;width:1200px;text-align:center;">2012</div>
<div class="t" style="top:1008.48px;font-size:12.5px;line-height:12.5px;height:12.5px;color:#252423;font-weight:bold;left:639.10px;width:1200px;text-align:center;">2013</div>
<div class="t" style="top:1008.48px;font-size:12.5px;line-height:12.5px;height:12.5px;color:#252423;font-weight:bold;left:834.35px;width:1200px;text-align:center;">2014</div>
<div class="t" style="top:1047.55px;font-size:11.3px;line-height:11.3px;height:11.3px;color:#252423;letter-spacing:0.95px;left:327.20px;width:1200px;text-align:center;">Année / Calendar Quarter</div>
<div class="t" style="left:200.5px;top:870.5px;width:200px;height:11.3px;font-size:11.3px;line-height:11.3px;text-align:center;color:#252423;transform:rotate(-90deg);transform-origin:50% 50%;letter-spacing:0.93px;text-indent:0.93px;">Montant ventes &amp; Marge</div>
</body></html>
